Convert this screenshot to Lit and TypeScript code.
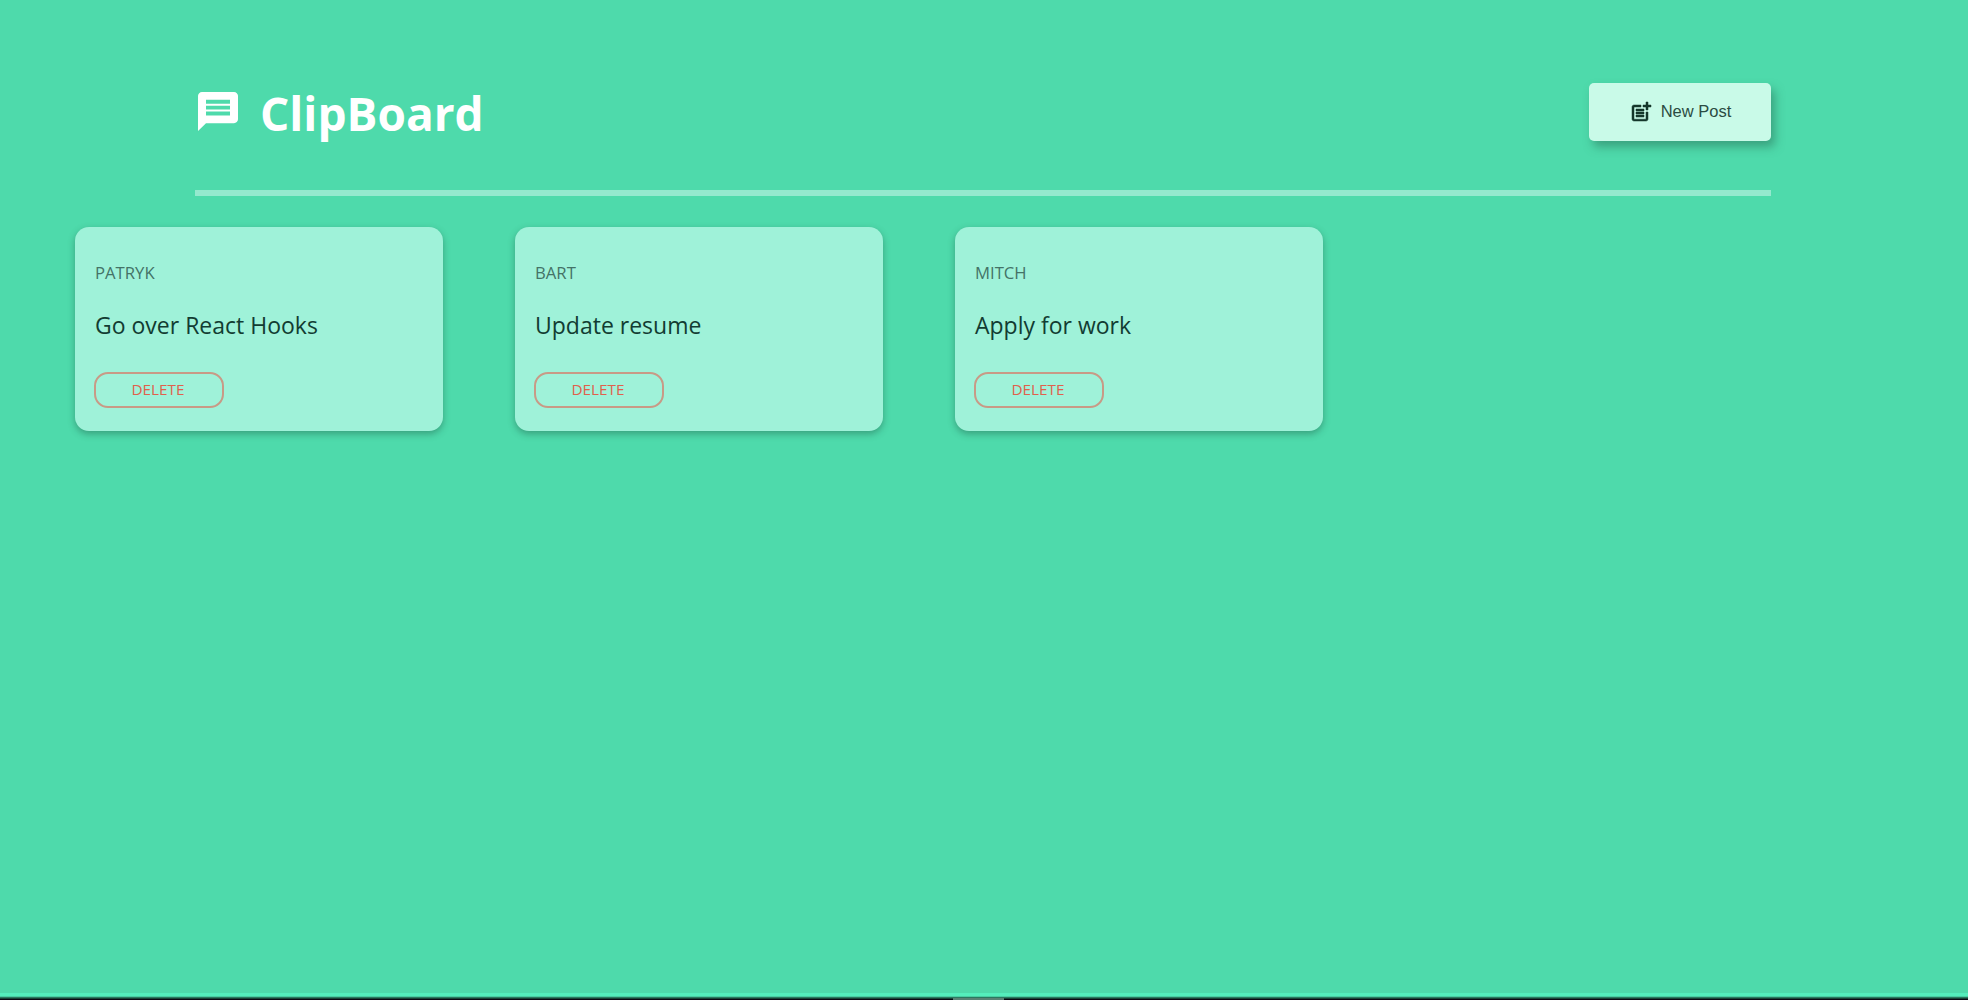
import { LitElement, html, css } from "lit";
import { customElement, property } from "lit/decorators.js";

@customElement("post-card")
class PostCard extends LitElement {
  @property() author = "";
  @property() text = "";

  static styles = css`
    :host {
      display: block;
    }
    .card {
      box-sizing: border-box;
      height: 204px;
      padding: 34px 20px 0 20px;
      border-radius: 14px;
      background: #9ff2d9;
      box-shadow: 0 3px 7px rgba(30, 90, 70, 0.45);
      display: flex;
      flex-direction: column;
      align-items: flex-start;
    }
    .author {
      font-size: 16.7px;
      line-height: 24px;
      color: #447367;
      text-transform: uppercase;
    }
    .text {
      margin-top: 24px;
      font-size: 23px;
      line-height: 32px;
      color: #123c32;
      white-space: nowrap;
    }
    .delete {
      box-sizing: border-box;
      width: 130px;
      height: 36px;
      margin-top: 31px;
      margin-left: -1px;
      padding: 0 2px 1px 0;
      border: 2.5px solid #c89a86;
      border-radius: 14px;
      background: transparent;
      color: #e0604c;
      font: 15.3px/29px "Open Sans", sans-serif;
    }
  `;

  render() {
    return html`
      <article class="card">
        <span class="author">${this.author}</span>
        <span class="text">${this.text}</span>
        <button class="delete">DELETE</button>
      </article>
    `;
  }
}

@customElement("app-root")
class AppRoot extends LitElement {
  static styles = css`
    :host {
      display: block;
      font-family: "Open Sans", "Noto Sans", sans-serif;
    }
    .page {
      height: 1000px;
      overflow: hidden;
      background: #4edaab;
      display: flex;
      flex-direction: column;
    }
    .header {
      box-sizing: border-box;
      width: 1576px;
      height: 196px;
      margin-left: 195px;
      padding: 83px 0 49px;
      border-bottom: 6px solid #94e9ce;
      display: flex;
      justify-content: space-between;
      align-items: flex-start;
      flex: none;
    }
    .brand {
      display: flex;
      align-items: center;
      height: 58px;
    }
    .logo {
      width: 48px;
      height: 47px;
      margin-left: -1px;
      margin-top: -1px;
      fill: #fff;
    }
    .title {
      margin: 2px 0 0 18px;
      font-size: 46px;
      line-height: 60px;
      font-weight: 700;
      color: #fff;
    }
    .new {
      width: 182px;
      height: 58px;
      padding: 0 0 2px;
      border: 0;
      border-radius: 5px;
      background: #c9fae8;
      box-shadow: 4px 6px 10px rgba(40, 110, 85, 0.5);
      display: flex;
      justify-content: center;
      align-items: center;
      gap: 8px;
      color: #2b4b42;
      font: 16.5px/24px "Liberation Sans", Arial, sans-serif;
    }
    .new-icon {
      width: 24px;
      height: 24px;
      margin-top: 2px;
      fill: #14362b;
      stroke: #14362b;
      stroke-width: 0.5;
    }
    .posts {
      display: grid;
      grid-template-columns: repeat(4, 368px);
      column-gap: 72px;
      padding: 31px 0 0 75px;
      flex: 1;
    }
    .edge {
      height: 7px;
      flex: none;
      background: linear-gradient(
        #54eebc 0 3px,
        #49cda2 3px 4px,
        #2a7960 4px 5px,
        #174638 5px 6px,
        #0b0713 6px
      );
      display: flex;
      justify-content: center;
      align-items: flex-end;
    }
    .handle {
      width: 51px;
      height: 2px;
      margin-right: 12px;
      background: #5a8275;
    }
  `;

  private posts = [
    { author: "Patryk", text: "Go over React Hooks" },
    { author: "Bart", text: "Update resume" },
    { author: "Mitch", text: "Apply for work" },
  ];

  render() {
    return html`
      <div class="page">
        <header class="header">
          <div class="brand">
            <svg class="logo" viewBox="0 0 24 24" preserveAspectRatio="none">
              <path
                d="M20 2H4c-1.1 0-1.99.9-1.99 2L2 22l4-4h14c1.1 0 2-.9 2-2V4c0-1.100-.9-2-2-2zm-2 12H6v-2h12v2zm0-3H6V9h12v2zm0-3H6V6h12v2z"
              />
            </svg>
            <h1 class="title">ClipBoard</h1>
          </div>
          <button class="new">
            <svg class="new-icon" viewBox="0 0 24 24">
              <path
                d="M17 19.220H5V7h7V5H5c-1.100 0-2 .9-2 2v12c0 1.100.9 2 2 2h12c1.100 0 2-.9 2-2v-7h-2v7.220z"
              />
              <path
                d="M19 2h-2v3h-3c.01.010 0 2 0 2h3v2.990c.01.010 2 0 2 0V7h3V5h-3V2zM7 9h8v2H7zM7 12v2h8v-2H7zM7 15h8v2H7z"
              />
            </svg>
            <span>New Post</span>
          </button>
        </header>
        <main class="posts">
          ${this.posts.map(
            (p) => html`<post-card .author=${p.author} .text=${p.text}></post-card>`
          )}
        </main>
        <footer class="edge"><div class="handle"></div></footer>
      </div>
    `;
  }
}
